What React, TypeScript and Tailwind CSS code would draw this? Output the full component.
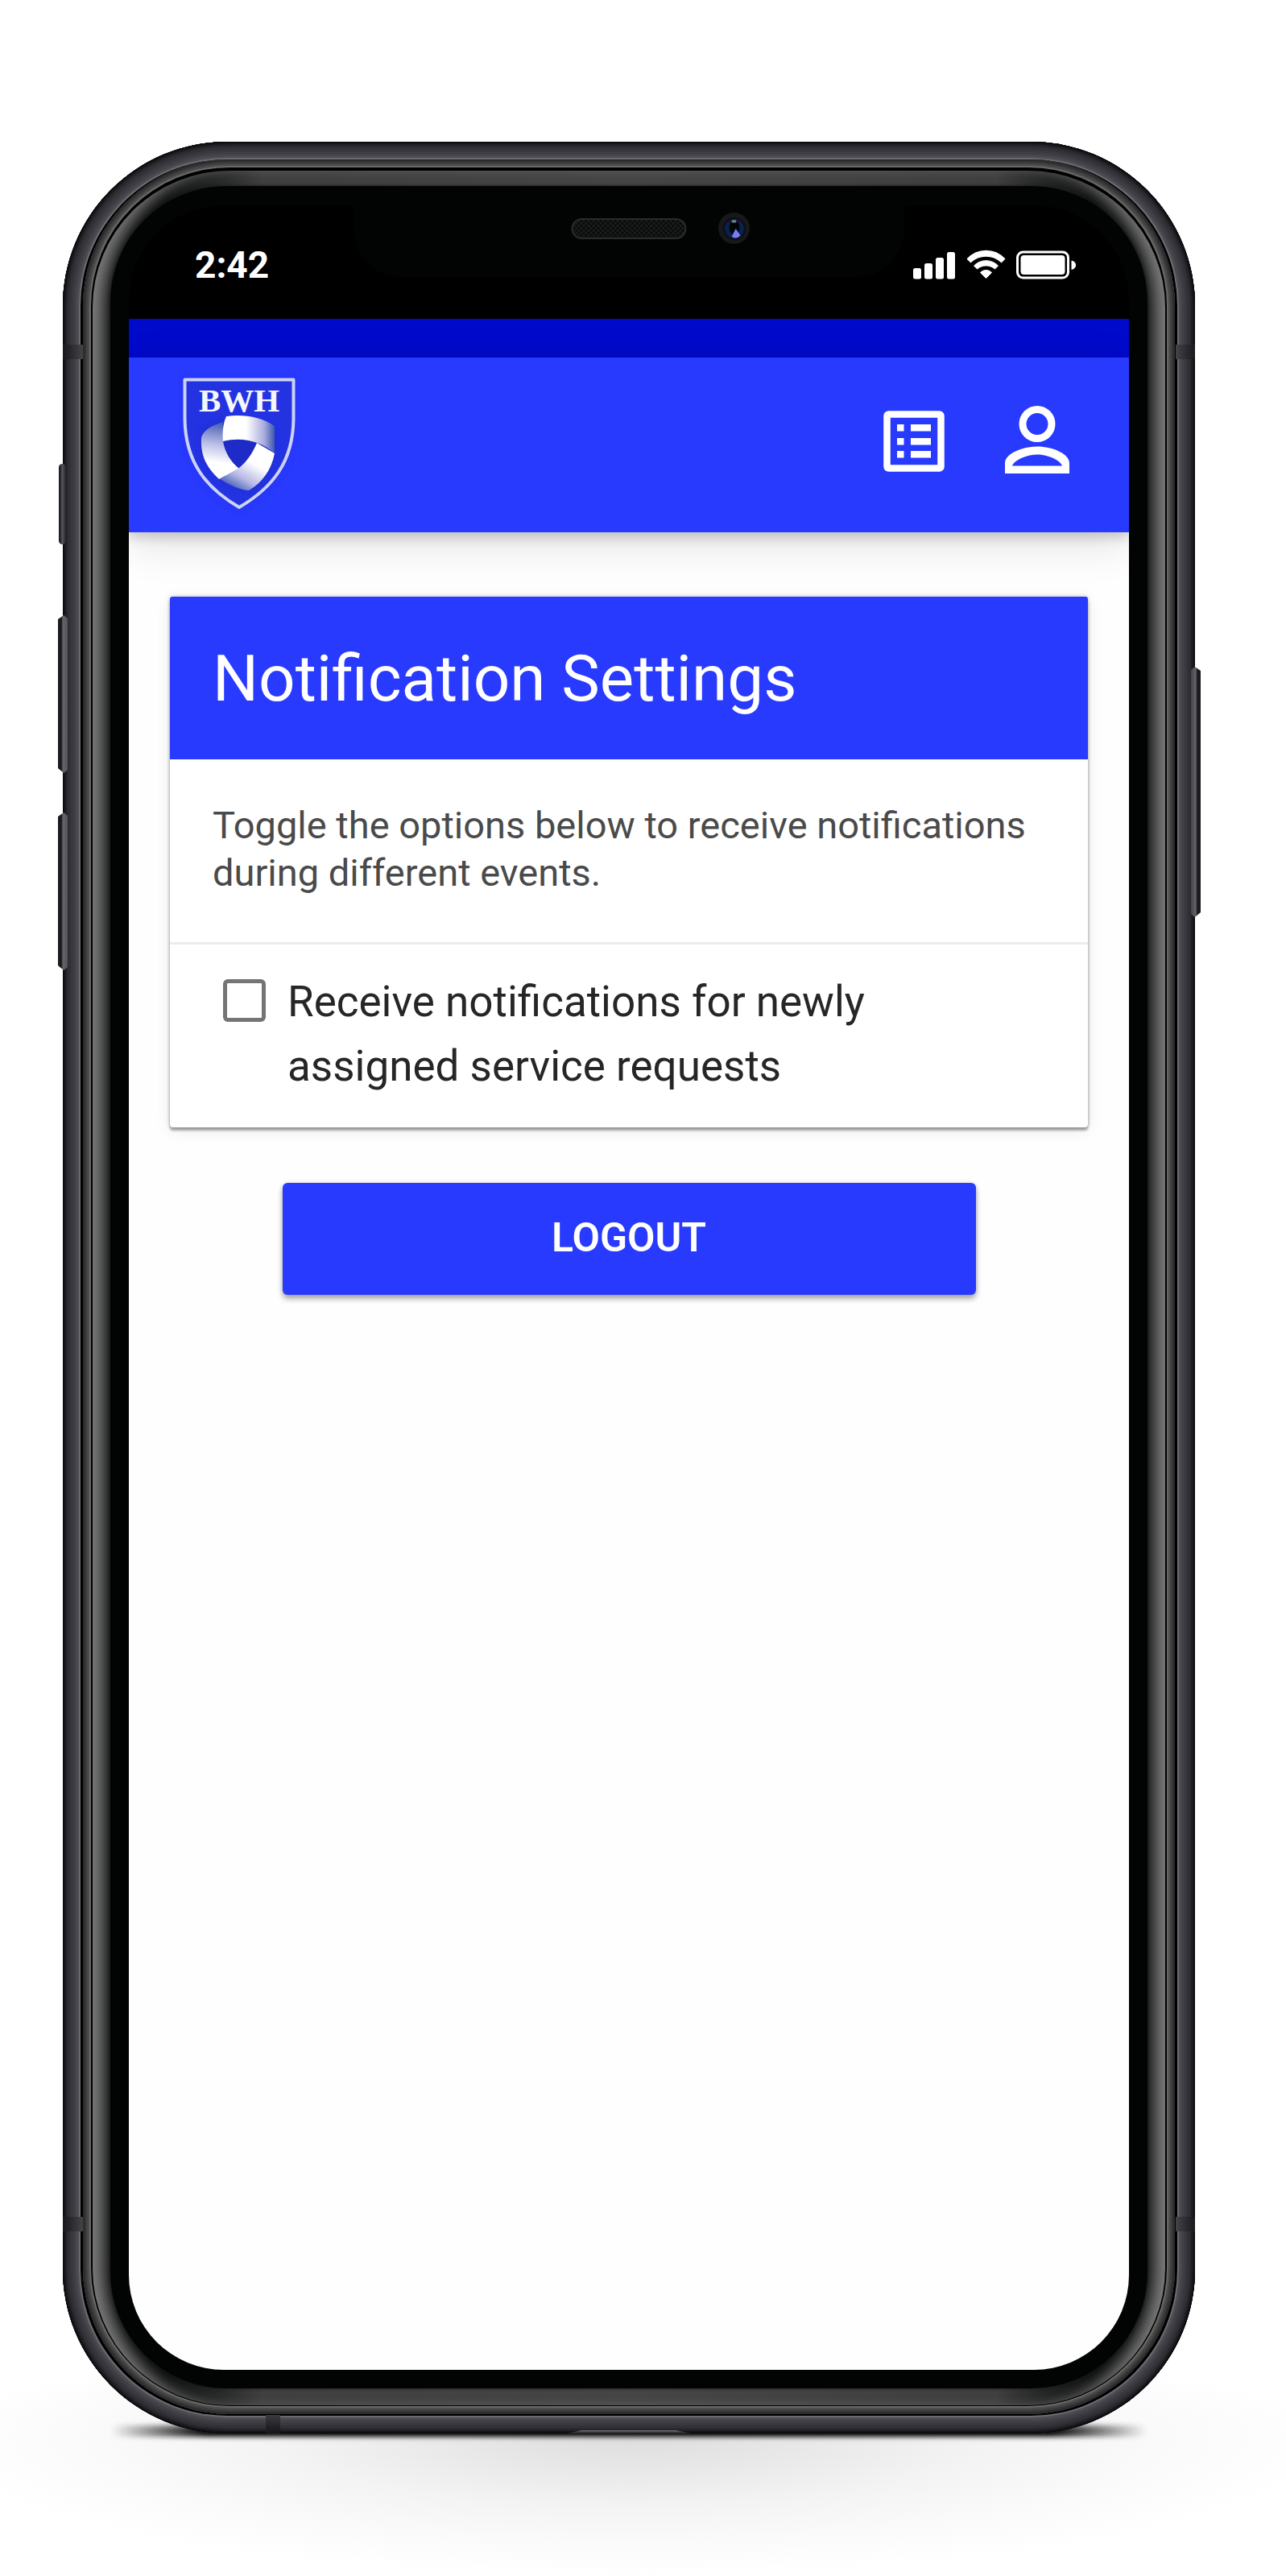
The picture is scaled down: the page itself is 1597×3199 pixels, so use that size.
import React from "react";

function ShieldLogo() {
  return (
    <svg viewBox="0 0 152 180" className="h-[180px] w-[152px]" role="img" aria-label="BWH">
      <defs>
        <linearGradient id="topBand" x1="0" x2="1">
          <stop offset="0.45" stopColor="#ffffff" />
          <stop offset="0.8" stopColor="#a9acdd" />
          <stop offset="1" stopColor="#3f57b0" />
        </linearGradient>
        <linearGradient id="leftBand" x1="0.6" y1="0" x2="0.5" y2="1">
          <stop offset="0" stopColor="#3f57b0" />
          <stop offset="0.4" stopColor="#b9bce6" />
          <stop offset="0.72" stopColor="#ffffff" />
        </linearGradient>
        <linearGradient id="rightBand" x1="0.9" y1="0.1" x2="0.3" y2="1">
          <stop offset="0.4" stopColor="#ffffff" />
          <stop offset="0.75" stopColor="#b4b7e4" />
          <stop offset="1" stopColor="#4a60b8" />
        </linearGradient>
        <filter id="glow" x="-20%" y="-20%" width="140%" height="140%">
          <feGaussianBlur stdDeviation="5" />
        </filter>
      </defs>
      <path d="M8 9H144V58C144 112 118 146 76 170C34 146 8 112 8 58Z" fill="#1c2bd0" opacity="0.55" filter="url(#glow)" />
      <path
        d="M8.500 9.500H143.500V58C143 112 117 144 76 168C35 144 9 112 8.500 58Z"
        fill="#2433e2"
        stroke="#ccd3f6"
        strokeWidth="4"
        strokeLinejoin="round"
      />
      <path d="M58 60L30 74V104L52 132L96 146L118 104L116 68Z" fill="#1a28b4" opacity="0.6" filter="url(#glow)" />
      <text
        x="76"
        y="49"
        textAnchor="middle"
        fontSize="41"
        fontWeight="700"
        fill="#f4f7fc"
        className="font-['Liberation_Serif',serif]"
      >
        BWH
      </text>
      <path d="M56 62C40 67 31 73 29 82C28 105 36 119 51 133L76 120C65 111 58 99 56 86Z" fill="url(#leftBand)" />
      <path d="M98 88L120 101C116 122 104 138 88 147C78 147 64 140 52 133L76 119C86 111 93 100 98 88Z" fill="url(#rightBand)" />
      <path d="M60 55C82 52 104 56 120 67V101C104 87 82 80 56 86C55 75 56 64 60 55Z" fill="url(#topBand)" />
    </svg>
  );
}

function ListIcon() {
  return (
    <svg viewBox="0 0 76 76" className="size-[76px]" fill="none" aria-hidden="true">
      <rect x="4.500" y="4.500" width="67" height="67" rx="2" stroke="#fff" strokeWidth="8.500" />
      {[17, 34, 50].map((y) => (
        <g key={y} fill="#fff">
          <rect x="17" y={y} width="8.500" height="8.500" />
          <rect x="34" y={y} width="25" height="8.500" />
        </g>
      ))}
    </svg>
  );
}

function PersonIcon() {
  return (
    <svg viewBox="0 0 80 84" className="h-[84px] w-[80px]" fill="none" aria-hidden="true">
      <circle cx="40" cy="22.500" r="18" stroke="#fff" strokeWidth="9" />
      <path
        fillRule="evenodd"
        d="M0 84V71C0 60 20 50.500 40 50.500S80 60 80 71V84ZM9 74.500H71C69 68 54 60.500 40 60.500S11 68 9 74.500Z"
        fill="#fff"
      />
    </svg>
  );
}

function StatusIcons() {
  return (
    <svg viewBox="0 0 204 38" className="h-[38px] w-[204px]" fill="#fff" aria-hidden="true">
      <rect x="0" y="23" width="10" height="13.500" rx="2.500" />
      <rect x="14" y="17" width="10" height="19.500" rx="2.500" />
      <rect x="28" y="10" width="10" height="26.500" rx="2.500" />
      <rect x="42" y="3" width="10" height="33.500" rx="2.500" />
      <path d="M67.500 11.500C80 -2 101 -2 113.500 11.500L109.500 15.500C99 5.500 82 5.500 71.500 15.500Z" stroke="#fff" strokeWidth="1.500" strokeLinejoin="round" />
      <path d="M75.500 20C84 11.500 97 11.500 105.500 20L101.500 24C95 18.500 86 18.500 79.500 24Z" stroke="#fff" strokeWidth="1" strokeLinejoin="round" />
      <path d="M83.500 28.500C87.500 24.500 93.500 24.500 97.500 28.500L90.500 35.500Z" stroke="#fff" strokeWidth="1" strokeLinejoin="round" />
      <rect x="129.500" y="3" width="63" height="32" rx="7" fill="none" stroke="#fff" strokeWidth="3" />
      <rect x="133.500" y="7" width="55" height="24" rx="4" />
      <path d="M196.500 13.500C204 15 204 23.500 196.500 25Z" />
    </svg>
  );
}

function StatusBar() {
  return (
    <div className="relative flex h-[141px] items-center justify-between bg-black pr-[64px] pl-[82px] pt-[6px]">
      <span className="text-[46px] leading-[54px] font-bold text-white">2:42</span>
      <StatusIcons />
      <div className="absolute inset-x-[279px] top-0 h-[89px] rounded-b-[60px] bg-[#020403]">
        <div className="absolute top-[16px] left-1/2 h-[26px] w-[143px] -translate-x-1/2 rounded-full border-2 border-[#2a2b2c] bg-[#0e1010] bg-[repeating-conic-gradient(#0a0b0b_0_25%,#1a1b1b_0_50%)] bg-[length:6px_6px]" />
        <div className="absolute top-[9px] left-[453px] flex size-[39px] items-center justify-center rounded-full bg-[#16181b]">
          <svg viewBox="0 0 26 26" className="size-[28px]" aria-hidden="true">
            <circle cx="13" cy="13" r="13" fill="#0d0d18" />
            <circle cx="13" cy="13" r="11" fill="#06244a" />
            <path d="M5 5Q13 -1 21 5L13 12Z" fill="#2c0a48" />
            <ellipse cx="13" cy="12" rx="6" ry="8" fill="#03030a" />
            <path d="M10 3h5v3h-5z" fill="#5e8a7a" />
            <path d="M14.500 13L20 21Q15 26 10 22Z" fill="#7a7cf5" />
          </svg>
        </div>
      </div>
    </div>
  );
}

function AppHeader() {
  return (
    <header className="relative">
      <div className="h-[48px] bg-[#000acb]" />
      <div className="flex items-center justify-between bg-[#293aff] pt-[18px] pr-[74px] pb-[19px] pl-[61px] shadow-[0_6px_14px_rgba(0,0,0,0.18),0_14px_50px_rgba(0,0,0,0.12)]">
        <ShieldLogo />
        <nav className="flex items-center gap-[75px] pb-[8px]">
          <button type="button" aria-label="Service requests">
            <ListIcon />
          </button>
          <button type="button" aria-label="Account" className="-mt-[4px]">
            <PersonIcon />
          </button>
        </nav>
      </div>
    </header>
  );
}

function SettingsScreen() {
  return (
    <main className="flex flex-1 flex-col items-center bg-[#fefefe] px-[51px] pt-[80px]">
      <section className="w-full rounded-[4px] bg-white shadow-[0_4px_3px_rgba(0,0,0,0.3),0_0_5px_rgba(0,0,0,0.25),0_4px_20px_rgba(0,0,0,0.08)]">
        <h1 className="rounded-t-[3px] bg-[#293aff] px-[53px] pt-[54px] pb-[52px] text-[80px] leading-[96px] text-white">
          Notification Settings
        </h1>
        <p className="border-b-[3px] border-[#ececec] px-[53px] pt-[52px] pb-[57px] text-[47px] leading-[59px] text-[#4a4a4a]">
          Toggle the options below to receive notifications during different events.
        </p>
        <label className="flex items-start gap-[27px] pt-[31px] pr-[200px] pb-[36px] pl-[66px] text-[53px] leading-[80px] text-[#262626]">
          <input
            type="checkbox"
            className="mt-[12px] size-[53px] shrink-0 appearance-none rounded-[6px] border-[5px] border-[#757575] bg-white checked:bg-[#293aff]"
          />
          <span>Receive notifications for newly assigned service requests</span>
        </label>
      </section>
      <button
        type="button"
        className="mt-[69px] w-[861px] max-w-full rounded-[6px] bg-[#293aff] pt-[31px] pb-[33px] text-[50px] leading-[75px] font-semibold text-white shadow-[0_5px_7px_rgba(0,0,0,0.32),0_0_5px_rgba(0,0,0,0.16)]"
      >
        LOGOUT
      </button>
    </main>
  );
}

function SideButtons() {
  return (
    <>
      <div className="absolute top-[400px] -left-[5px] h-[100px] w-[9px] rounded-[5px] bg-linear-to-r from-[#111114] via-[#55545a] to-[#232227]" />
      <div className="absolute top-[588px] -left-[6px] h-[196px] w-[12px] bg-linear-to-r from-[#1b1a1e] from-35% via-[#646369] via-50% to-[#55545a] [clip-path:polygon(0_5px,60%_0,100%_4px,100%_192px,60%_100%,0_190px)]" />
      <div className="absolute top-[833px] -left-[6px] h-[196px] w-[12px] bg-linear-to-r from-[#1b1a1e] from-35% via-[#646369] via-50% to-[#55545a] [clip-path:polygon(0_5px,60%_0,100%_4px,100%_192px,60%_100%,0_190px)]" />
      <div className="absolute top-[652px] -right-[7px] h-[311px] w-[12px] bg-linear-to-l from-[#1b1a1e] from-35% via-[#646369] via-50% to-[#45444a] [clip-path:polygon(0_4px,40%_0,100%_5px,100%_305px,40%_100%,0_307px)]" />
      <div className="absolute top-[252px] left-0 h-[18px] w-[25px] bg-linear-to-r from-[#19191c] to-[#454449]" />
      <div className="absolute top-[252px] right-0 h-[18px] w-[24px] bg-linear-to-l from-[#19191c] to-[#454449]" />
      <div className="absolute bottom-[251px] left-0 h-[18px] w-[25px] bg-linear-to-r from-[#19191c] to-[#454449]" />
      <div className="absolute right-0 bottom-[251px] h-[18px] w-[24px] bg-linear-to-l from-[#19191c] to-[#454449]" />
      <div className="absolute bottom-0 left-[252px] h-[23px] w-[18px] bg-linear-to-t from-[#161619] to-[#3b3a3f]" />
      <div className="absolute bottom-0 left-[626px] h-[4px] w-[154px] bg-linear-to-b from-[#77767b] to-[#1a1a1c] [clip-path:polygon(12%_0,88%_0,100%_100%,0_100%)]" />
    </>
  );
}

function PhoneFrame({ children }: { children: React.ReactNode }) {
  return (
    <div className="relative flex flex-1 flex-col">
      <div className="absolute inset-x-[60px] -bottom-[4px] h-[14px] bg-[linear-gradient(to_right,transparent,#000_120px,#000_calc(100%-120px),transparent)] blur-[3px]" />
      <div className="relative flex flex-1 flex-col rounded-[204px] bg-black px-[25px] pt-[22px] pb-[24px] shadow-[inset_0_0_0_1px_#08080a,inset_0_0_0_3px_#151519,inset_0_0_0_5px_#212125,inset_0_0_0_7px_#2b2a2f,inset_0_0_0_10px_#323137,inset_0_0_0_13px_#39383e,inset_0_0_0_16px_#403f45,inset_0_0_0_18px_#48474d,inset_0_0_0_20px_#4e4d53,inset_0_0_0_22px_#6c6b72]">
        <div className="flex flex-1 flex-col rounded-[182px] bg-black px-[12px] pt-[14px] pb-[11px] shadow-[inset_0_0_0_2px_#2a2a2a,inset_0_0_0_4px_#363636,inset_0_0_0_6px_#424242,inset_0_0_0_8px_#4e4e4e,inset_0_0_0_10px_#686868]">
          <div className="flex flex-1 flex-col rounded-[170px] bg-[linear-gradient(to_right,#0a0c0b_90px,#404040_210px,#464646_50%,#404040_calc(100%-210px),#0a0c0b_calc(100%-90px))] px-[22px] pt-[19px] pb-[21px] shadow-[inset_25px_0_20px_-11px_#7e7e7e,inset_-25px_0_20px_-11px_#7e7e7e]">
            <div className="flex flex-1 flex-col rounded-[144px] bg-[#020403] px-[23px] pt-[24px] pb-[23px] shadow-[0_0_4px_#151716]">
              <div className="flex flex-1 flex-col overflow-hidden rounded-[118px]">{children}</div>
            </div>
          </div>
        </div>
        <SideButtons />
      </div>
    </div>
  );
}

export default function App() {
  return (
    <div className="relative flex min-h-screen flex-col overflow-hidden bg-white pt-[176px] pr-[113px] pb-[177px] pl-[78px] font-[Roboto,sans-serif]">
      <div className="absolute inset-x-0 bottom-0 h-[177px] bg-[radial-gradient(ellipse_55%_100%_at_49%_0,#dcdcdc,#e9e9e9_28%,#f3f3f3_50%,#fafafa_75%,#ffffff)]" />
      <div className="absolute inset-x-0 bottom-[177px] h-[110px] bg-[radial-gradient(ellipse_55%_100%_at_49%_100%,#dcdcdc,#e9e9e9_28%,#f3f3f3_50%,#fafafa_75%,#ffffff)]" />
      <PhoneFrame>
        <StatusBar />
        <AppHeader />
        <SettingsScreen />
      </PhoneFrame>
    </div>
  );
}
